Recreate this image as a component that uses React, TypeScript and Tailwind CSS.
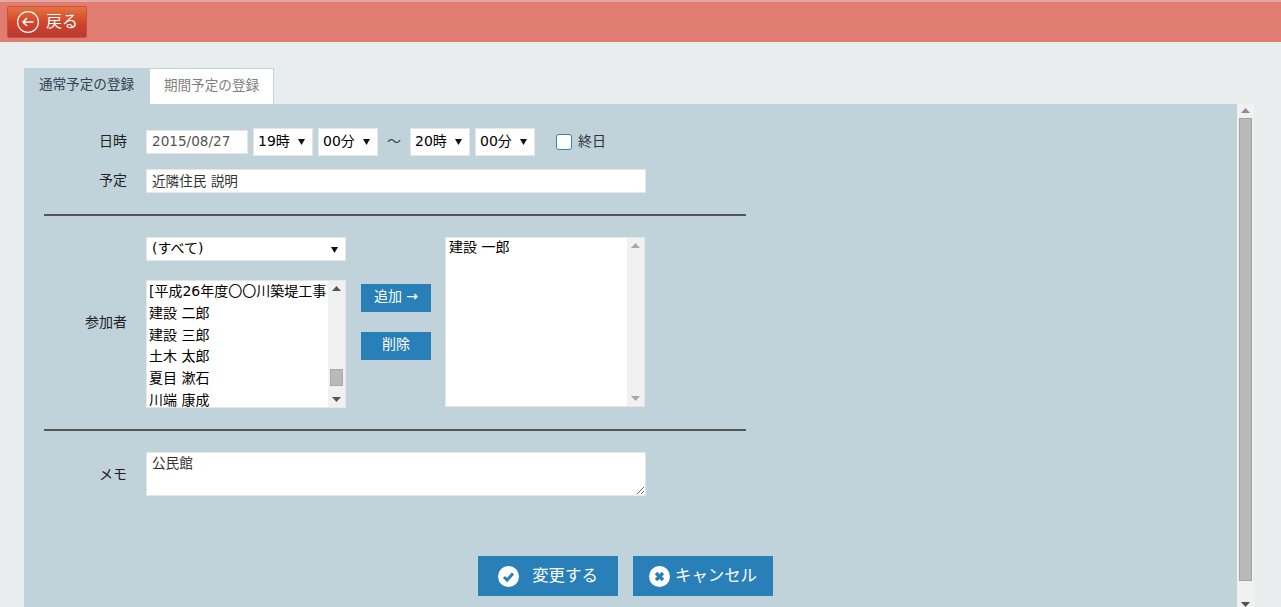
import React from 'react';

const font = "font-['DejaVu_Sans','Noto_Sans_CJK_JP',sans-serif]";

const staffList = ['建設 二郎', '建設 三郎', '土木 太郎', '夏目 漱石', '川端 康成'];

function FakeSelect({ label, width }: { label: string; width: string }) {
  return (
    <div className={`${width} flex items-center justify-between pr-[7px] bg-white border border-[#e6e6e6] text-[14px] text-black`}>
      <span className="pb-[1px]">{label}</span>
      <Caret />
    </div>
  );
}

function Caret() {
  return (
    <svg width="7" height="7" viewBox="0 0 7 7" className="shrink-0">
      <path d="M0 1h7L3.5 7z" fill="#111" />
    </svg>
  );
}

function Arrow({ up, color }: { up?: boolean; color: string }) {
  return (
    <svg width="9" height="5" viewBox="0 0 9 5">
      <path d={up ? 'M4.5 0L9 5H0z' : 'M0 0h9L4.5 5z'} fill={color} />
    </svg>
  );
}

function ActionButton({ icon, label, gap }: { icon: React.ReactNode; label: string; gap: string }) {
  return (
    <button className={`w-[140px] h-[40px] bg-[#2980b9] text-white text-[16.4px] flex items-center justify-center ${gap}`}>
      {icon}
      <span>{label}</span>
    </button>
  );
}

export default function App() {
  return (
    <div className={`${font} h-[607px] overflow-hidden bg-[#e9eded] flex flex-col`}>
      {/* Header */}
      <header className="h-[42px] shrink-0 bg-[#e07c70] border-t-2 border-[#e9eded]/40 pl-[7px] pt-[4px]">
        <button className="w-[80px] h-[32px] flex items-center pl-[9px] gap-[7px] rounded-[2px] border border-[#c8503c] bg-gradient-to-b from-[#e5733f] via-[#d2452a] to-[#b93a30] text-white text-[16px]">
          <svg width="22" height="22" viewBox="0 0 22 22" fill="none" stroke="#fff">
            <circle cx="11" cy="11" r="10.4" strokeWidth="1.2" />
            <path d="M16.5 11H6M10 7l-4 4 4 4" strokeWidth="1.5" />
          </svg>
          <span>戻る</span>
        </button>
      </header>

      <main className="flex-1 min-h-0 pt-[26px] pl-[24px] pr-[27px] flex flex-col">
        {/* Tabs */}
        <div className="flex h-[36px] shrink-0 text-[13.6px]">
          <div className="w-[125px] bg-[#c0d2da] text-[#33434d] flex items-center justify-center pb-[3px]">通常予定の登録</div>
          <div className="w-[125px] bg-white border border-b-0 border-[#c0d2da] text-[#7f7f7f] flex items-center justify-center pb-[3px]">期間予定の登録</div>
        </div>

        <div className="flex-1 min-h-0 flex">
          {/* Form panel */}
          <section className="flex-1 bg-[#c0d2da] pt-[24px] pl-[20px] text-[14px] text-[#222]">
            <div className="w-[702px]">
              <div className="flex items-center h-[27px]">
                <label className="w-[83px] text-right">日時</label>
                <input
                  readOnly
                  value="2015/08/27"
                  className="ml-[19px] w-[102px] h-[24px] bg-white border border-[#e6e6e6] pl-[5px] pr-0 pb-[1px] text-[13.6px] text-[#555] outline-none"
                />
                <div className="ml-[5px] flex gap-[5px]">
                  <FakeSelect label="19時" width="w-[60px] h-[28px] pl-[4px]" />
                  <FakeSelect label="00分" width="w-[60px] h-[28px] pl-[4px]" />
                </div>
                <span className="w-[32px] text-center text-[14px] text-[#444]">～</span>
                <div className="flex gap-[5px]">
                  <FakeSelect label="20時" width="w-[60px] h-[28px] pl-[4px]" />
                  <FakeSelect label="00分" width="w-[60px] h-[28px] pl-[4px]" />
                </div>
                <input type="checkbox" className="ml-[21px] appearance-none w-[16px] h-[16px] bg-white border border-[#3c7fb1] rounded-[3px]" />
                <span className="ml-[6px] text-[14px] text-[#333]">終日</span>
              </div>

              <div className="flex items-center h-[24px] mt-[14px]">
                <label className="w-[83px] text-right pb-[2px]">予定</label>
                <input
                  readOnly
                  value="近隣住民 説明"
                  className="ml-[19px] w-[500px] h-[24px] bg-white border border-[#e6e6e6] pl-[5px] pr-[5px] pb-[3px] text-[13.6px] text-[#333] outline-none"
                />
              </div>

              <hr className="mt-[21px] border-t-2 border-[#555]" />

              {/* Participants */}
              <div className="flex items-center mt-[21px]">
                <label className="w-[83px] text-right">参加者</label>
                <div className="ml-[19px] w-[200px] flex flex-col">
                  <FakeSelect label="(すべて)" width="w-[200px] h-[24px] pl-[5px]" />
                  <div className="mt-[19px] h-[128px] bg-white border border-[#e6e6e6] flex overflow-hidden">
                    <div className="flex-1 min-w-0 overflow-hidden pl-[2px] text-[14px] leading-[21.8px] text-black">
                      <div className="whitespace-nowrap">[平成26年度〇〇川築堤工事</div>
                      {staffList.map((name) => (
                        <div key={name} className="whitespace-nowrap">{name}</div>
                      ))}
                    </div>
                    <div className="w-[17px] shrink-0 bg-[#f1f1f1] flex flex-col items-center justify-between py-[5px] relative">
                      <Arrow up color="#555" />
                      <div className="absolute left-[2px] bottom-[21px] w-[13px] h-[17px] bg-[#b9b9b9] border border-[#a8a8a8]" />
                      <Arrow color="#555" />
                    </div>
                  </div>
                </div>
                <div className="ml-[15px] w-[70px] flex flex-col gap-[20px] mt-[-2px] text-[14px] text-white">
                  <button className="h-[28px] bg-[#2980b9] pb-[2px]">追加 →</button>
                  <button className="h-[28px] bg-[#2980b9] pb-[2px]">削除</button>
                </div>
                <div className="ml-[14px] w-[200px] h-[170px] self-start bg-white border border-[#e6e6e6] flex">
                  <div className="flex-1 pl-[3px] text-[14px] leading-[18px] text-black">建設 一郎</div>
                  <div className="w-[17px] bg-[#f1f1f1] flex flex-col items-center justify-between py-[5px]">
                    <Arrow up color="#a8a8a8" />
                    <Arrow color="#a8a8a8" />
                  </div>
                </div>
              </div>

              <hr className="mt-[21px] border-t-2 border-[#555]" />

              <div className="flex items-center mt-[21px]">
                <label className="w-[83px] text-right">メモ</label>
                <textarea
                  readOnly
                  value="公民館"
                  className="block ml-[19px] w-[500px] h-[44px] bg-white border border-[#e6e6e6] pl-[5px] pr-[5px] py-0 text-[13.6px] leading-[20px] text-[#333] outline-none"
                />
              </div>
            </div>

            <div className="mt-[60px] ml-[434px] flex gap-[15px]">
              <ActionButton
                gap="gap-[13px]"
                label="変更する"
                icon={
                  <svg width="21" height="21" viewBox="0 0 21 21">
                    <circle cx="10.5" cy="10.5" r="10.5" fill="#fff" />
                    <path d="M6 11l3.2 3L15 7.5" fill="none" stroke="#2980b9" strokeWidth="3" />
                  </svg>
                }
              />
              <ActionButton
                gap="gap-[5px]"
                label="キャンセル"
                icon={
                  <svg width="21" height="21" viewBox="0 0 21 21">
                    <circle cx="10.5" cy="10.5" r="10.5" fill="#fff" />
                    <path d="M7 7l7 7M14 7l-7 7" fill="none" stroke="#2980b9" strokeWidth="3.4" />
                  </svg>
                }
              />
            </div>
          </section>

          {/* Page scrollbar */}
          <div className="w-[17px] shrink-0 bg-[#f1f1f1] flex flex-col items-center pt-[4px] pb-0 relative">
            <Arrow up color="#8f8f8f" />
            <div className="mt-[5px] w-[13px] h-[463px] bg-[#b9b9b9] border border-[#a3a3a3]" />
            <div className="absolute bottom-0 left-[4px]">
              <Arrow color="#505050" />
            </div>
          </div>
        </div>
      </main>
    </div>
  );
}
